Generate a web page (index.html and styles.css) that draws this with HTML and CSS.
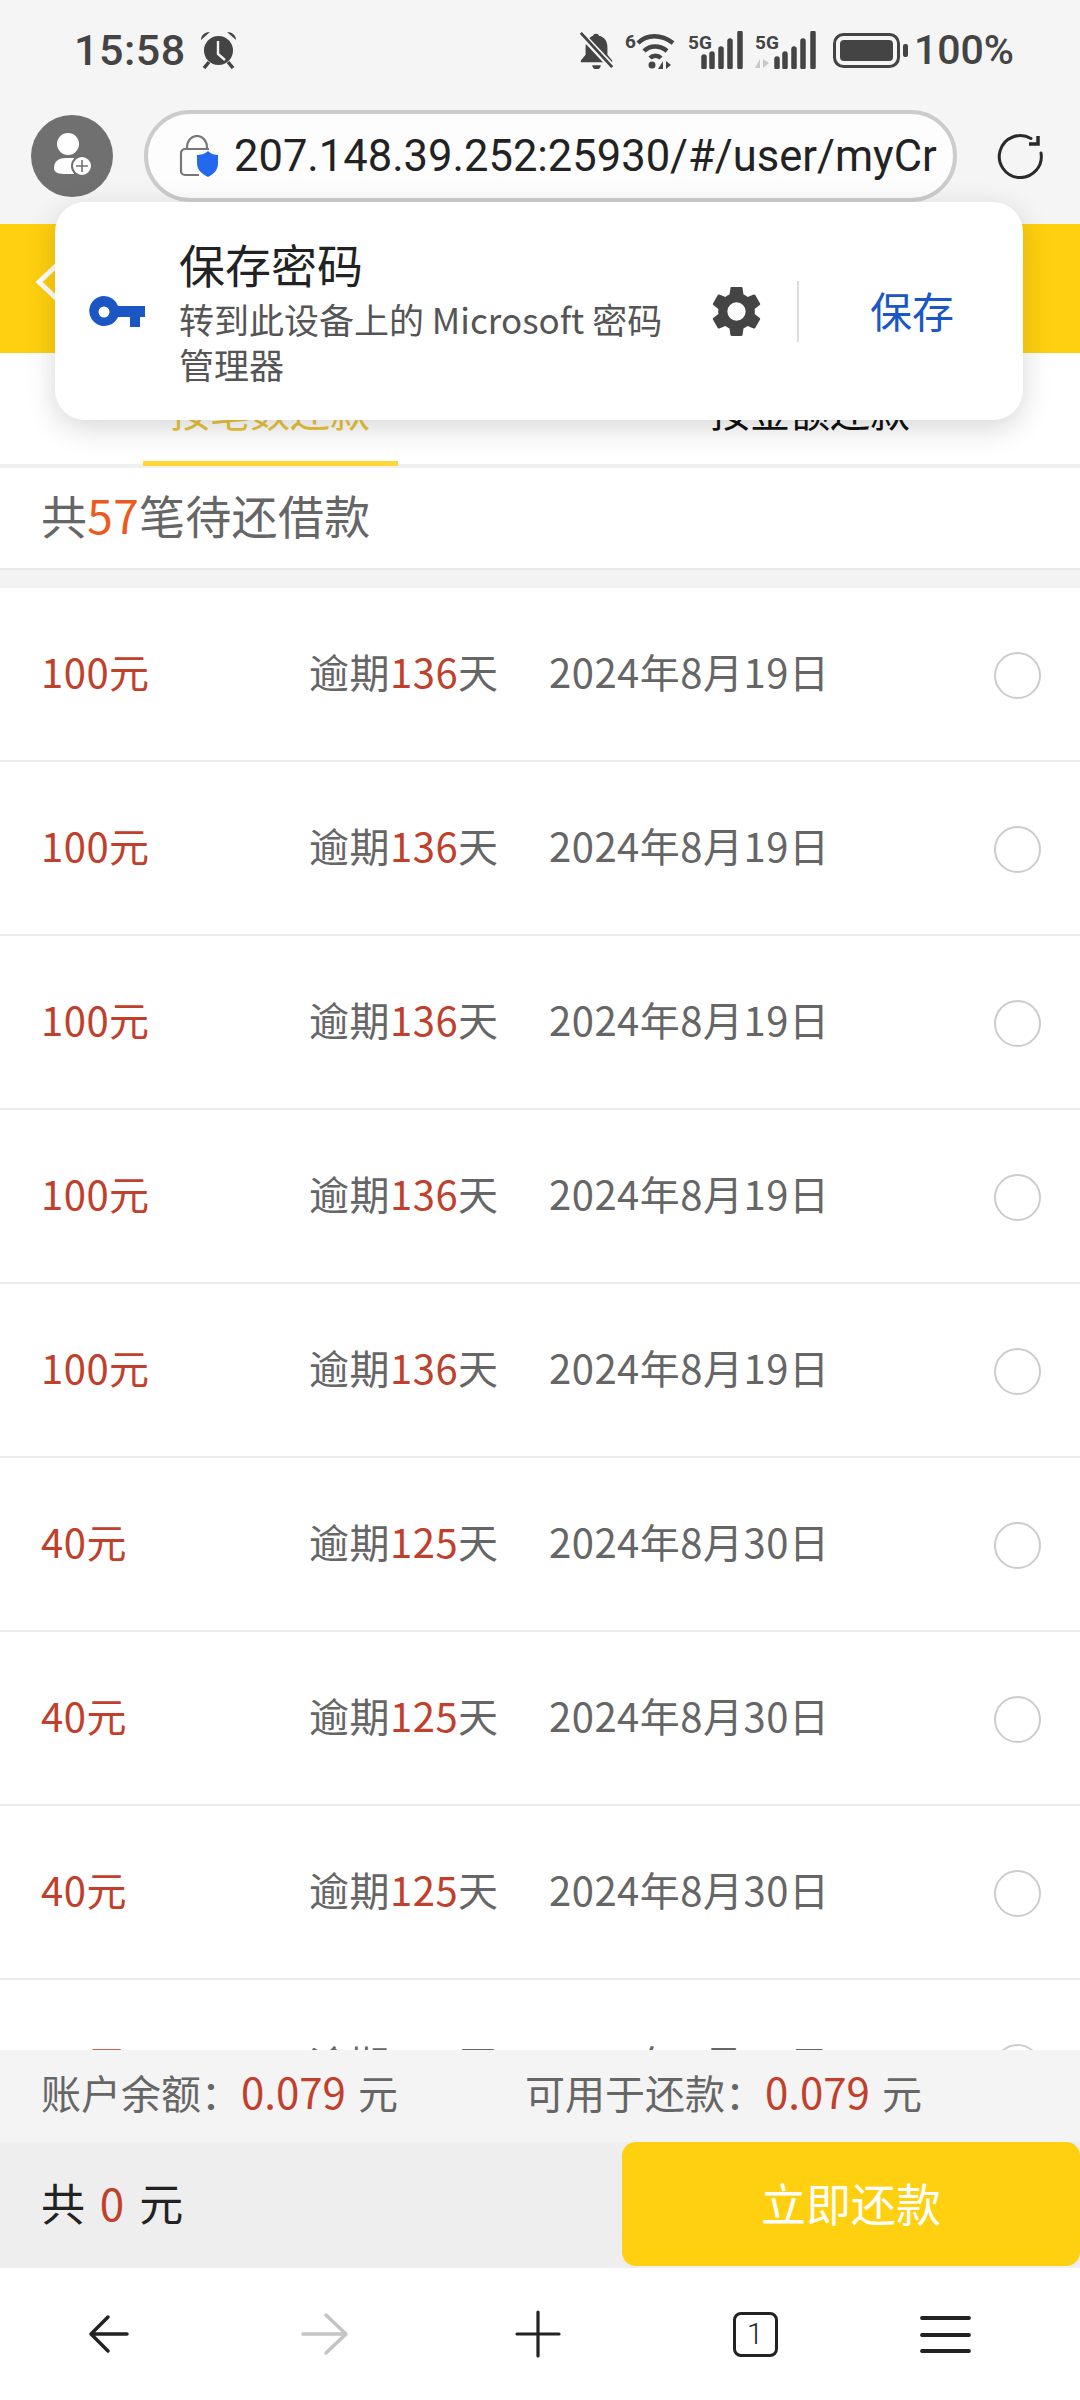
FILE: index.html
```html
<!DOCTYPE html>
<html lang="zh-CN">
<head>
<meta charset="utf-8">
<title>待还借款</title>
<link rel="stylesheet" href="styles.css">
</head>
<body>
<div class="page">
  <div class="status">
    <div class="status-left">
      <span class="time">15:58</span>
      <svg class="alarm" viewBox="0 0 38 38"><circle cx="18.500" cy="19.500" r="14.500" fill="#444"/><path d="M18 10v13l7 6" fill="none" stroke="#f5f5f5" stroke-width="2.400"/><path d="M1 9c0-5 4-8 9-8zM36 9c0-5-4-8-9-8z" fill="#444"/><path d="M9 31l-5 6M28 31l5 6" stroke="#444" stroke-width="3.500" fill="none"/></svg>
    </div>
    <div class="status-right">
      <svg class="ic-bell" viewBox="0 0 35 40"><path d="M17 3c2 0 3 1 3 2 6 1 9 6 9 12v8l5 6v2H1v-2l5-6v-8c0-6 4-11 8-12 0-1 1-2 3-2z" fill="#444"/><path d="M13 36h9a4.500 4.500 0 0 1-9 0z" fill="#444"/><path d="M0 2l34 36" stroke="#f5f5f5" stroke-width="7"/><path d="M1 2l33 36" stroke="#444" stroke-width="3"/></svg>
      <svg class="ic-wifi" viewBox="0 0 52 38"><text x="0" y="17" class="sig-text">6</text><path d="M13 12C22 3 36 3 48 12M19 20c6-6 16-6 23 0M25 27c3-3 8-3 11 0" fill="none" stroke="#444" stroke-width="4.500"/><circle cx="27" cy="34" r="3.500" fill="#444"/><path d="M38 38v-8l-5 8zM41 30v8l5-4z" fill="#444"/></svg>
      <svg class="ic-sig" viewBox="0 0 56 38"><text x="0" y="18" class="sig-text">5G</text><path d="M16 26v10M24 23v13M33 18v18M42 10v26M52 2v34" stroke="#444" stroke-width="5.500" stroke-linecap="round"/></svg>
      <svg class="ic-sig2" viewBox="0 0 62 38"><text x="0" y="18" class="sig-text">5G</text><path d="M5 37v-9l-5 9zM8 28v9l6-5z" fill="#c8c8c8"/><path d="M22 28v8M30 23v13M39 18v18M48 10v26M58 2v34" stroke="#444" stroke-width="5.500" stroke-linecap="round"/></svg>
      <svg class="ic-batt" viewBox="0 0 75 35"><rect x="1.500" y="1.500" width="64" height="32" rx="9" fill="none" stroke="#444" stroke-width="3"/><rect x="7" y="7" width="53" height="21" rx="4" fill="#444"/><rect x="70" y="11" width="5" height="13" rx="2" fill="#444"/></svg>
      <span class="pct">100%</span>
    </div>
  </div>

  <div class="toolbar">
    <div class="avatar">
      <svg class="avatar-ic" viewBox="0 0 82 82"><circle cx="37" cy="29" r="11" fill="#fff"/><path d="M23 53c0-7 5-10 12-10h8v16h-8c-7 0-12-1-12-6z" fill="#fff"/><circle cx="51" cy="51" r="10" fill="#fff" stroke="#707070" stroke-width="2"/><path d="M45 51h12M51 45v12" stroke="#707070" stroke-width="1.600"/></svg>
    </div>
    <div class="urlbar">
      <svg class="lock" viewBox="0 0 40 42"><path d="M6 14a4 4 0 0 0-4 4v18a4 4 0 0 0 4 4h14M30 14H6M8 13c0-16 20-16 20 0" fill="none" stroke="#777" stroke-width="2.200"/><path d="M29 16c3 3 7 4 10 4v8c0 7-4 11-10 14-6-3-11-7-11-14v-8c3 0 8-1 11-4z" fill="#2468ee"/></svg>
      <span class="url">207.148.39.252:25930/#/user/myCr</span>
    </div>
    <svg class="reload" viewBox="0 0 46 46"><path d="M34 5.500A21 21 0 1 0 44 20" fill="none" stroke="#2a2a2a" stroke-width="3" stroke-linecap="round"/><path d="M41 3v8H32" fill="none" stroke="#2a2a2a" stroke-width="3.500"/></svg>
  </div>

  <header class="topbar">
    <svg class="chev" viewBox="0 0 24 44"><path d="M21 3 3 20l18 17" fill="none" stroke="#fff" stroke-width="5"/></svg>
  </header>

  <div class="tabs">
    <div class="tab tab-on">按笔数还款</div>
    <div class="tab">按金额还款</div>
  </div>

  <div class="count">共<span class="orange">57</span>笔待还借款</div>

  <main class="list">
    <div class="row"><span class="amt">100元</span><span class="over">逾期<em>136</em>天</span><span class="date">2024年8月19日</span><i class="radio"></i></div>
    <div class="row"><span class="amt">100元</span><span class="over">逾期<em>136</em>天</span><span class="date">2024年8月19日</span><i class="radio"></i></div>
    <div class="row"><span class="amt">100元</span><span class="over">逾期<em>136</em>天</span><span class="date">2024年8月19日</span><i class="radio"></i></div>
    <div class="row"><span class="amt">100元</span><span class="over">逾期<em>136</em>天</span><span class="date">2024年8月19日</span><i class="radio"></i></div>
    <div class="row"><span class="amt">100元</span><span class="over">逾期<em>136</em>天</span><span class="date">2024年8月19日</span><i class="radio"></i></div>
    <div class="row"><span class="amt">40元</span><span class="over">逾期<em>125</em>天</span><span class="date">2024年8月30日</span><i class="radio"></i></div>
    <div class="row"><span class="amt">40元</span><span class="over">逾期<em>125</em>天</span><span class="date">2024年8月30日</span><i class="radio"></i></div>
    <div class="row"><span class="amt">40元</span><span class="over">逾期<em>125</em>天</span><span class="date">2024年8月30日</span><i class="radio"></i></div>
    <div class="row"><span class="amt">40元</span><span class="over">逾期<em>125</em>天</span><span class="date">2024年8月30日</span><i class="radio"></i></div>
  </main>

  <div class="balance">
    <div class="bal-a">账户余额：<em>0.079</em> 元</div>
    <div class="bal-b">可用于还款：<em>0.079</em> 元</div>
  </div>
  <div class="pay">
    <div class="total">共 <em>0</em> 元</div>
    <div class="paybtn">立即还款</div>
  </div>

  <nav class="nav">
    <svg class="n-ic" viewBox="0 0 60 60"><path d="M30 13 13 30l17 17M13 30h36" fill="none" stroke="#222" stroke-width="3.500" stroke-linecap="round" stroke-linejoin="round"/></svg>
    <svg class="n-ic" viewBox="0 0 60 60"><path d="M33 11 53 30 33 49M10 30h43" fill="none" stroke="#c4c4c4" stroke-width="3.500" stroke-linecap="round" stroke-linejoin="round"/></svg>
    <svg class="n-ic" viewBox="0 0 60 60"><path d="M9 30h42M30 8v44" fill="none" stroke="#222" stroke-width="3.200" stroke-linecap="round"/></svg>
    <div class="tabcount">1</div>
    <svg class="n-ic" viewBox="0 0 60 60"><path d="M6 14h47M6 31h47M6 47h47" fill="none" stroke="#222" stroke-width="3.800" stroke-linecap="round"/></svg>
  </nav>

  <div class="savepop">
    <svg class="key" viewBox="0 0 56 32"><path d="M15 0a15 15 0 0 1 14 10h27v11h-5v10H41V21H29A15 15 0 1 1 15 0z" fill="#1a56c4"/><circle cx="15" cy="16" r="5.500" fill="#fff"/></svg>
    <div class="pop-text">
      <div class="pop-title">保存密码</div>
      <div class="pop-sub">转到此设备上的 Microsoft 密码管理器</div>
    </div>
    <svg class="gear" viewBox="0 0 24 24"><path d="M19.140 12.940c.04-.3.060-.61.060-.94 0-.32-.02-.64-.07-.94l2.030-1.580a.49.49 0 0 0 .12-.61l-1.920-3.320a.488.488 0 0 0-.59-.22l-2.390.96c-.5-.38-1.030-.7-1.620-.94l-.36-2.540a.484.484 0 0 0-.48-.41h-3.840c-.24 0-.43.170-.47.410l-.36 2.540c-.59.24-1.130.57-1.620.94l-2.390-.96c-.22-.08-.47 0-.59.220L2.740 8.870c-.12.210-.08.470.12.610l2.030 1.580c-.05.3-.09.630-.09.940s.02.640.07.940l-2.030 1.580a.49.49 0 0 0-.12.610l1.920 3.320c.12.220.37.290.59.220l2.390-.96c.5.380 1.030.7 1.620.94l.36 2.540c.05.240.24.410.48.410h3.840c.24 0 .44-.170.47-.410l.36-2.540c.59-.24 1.130-.56 1.620-.94l2.390.96c.22.080.47 0 .59-.220l1.920-3.320c.12-.22.070-.47-.12-.61l-2.010-1.580zM12 15.600A3.610 3.610 0 0 1 8.400 12 3.610 3.610 0 0 1 12 8.400a3.610 3.610 0 0 1 3.600 3.600 3.610 3.610 0 0 1-3.600 3.600z" fill="#444"/></svg>
    <div class="pop-div"></div>
    <div class="pop-save">保存</div>
  </div>
</div>
</body>
</html>
```

FILE: styles.css
```css
* { box-sizing: border-box; }
html, body { margin: 0; padding: 0; }
body { font-family: "Noto Sans CJK SC", "Noto Sans", sans-serif; background: #fff; }
em { font-style: normal; }
.page { position: relative; width: 1080px; height: 2400px; overflow: hidden; display: flex; flex-direction: column; }

.status { height: 100px; flex: none; background: #f5f5f5; display: flex; justify-content: space-between; align-items: center; padding: 0 66px 0 74px; color: #444; font-family: Roboto, sans-serif; font-size: 41px; font-weight: 500; }
.status-left, .status-right { display: flex; align-items: center; }
.time { font-size: 43px; letter-spacing: 0.5px; }
.alarm { width: 38px; height: 38px; margin-left: 14px; }
.status-right { gap: 11px; }
.status-right svg { height: 38px; display: block; }
.ic-bell { width: 35px; }
.ic-wifi { width: 52px; }
.ic-sig { width: 56px; }
.ic-sig2 { width: 62px; margin-right: 5px; }
.ic-batt { width: 75px !important; height: 35px !important; }
.pct { margin-left: -5px; font-size: 41px; }
.sig-text { font: 700 19px "Roboto", sans-serif; fill: #444; }

.toolbar { height: 124px; flex: none; background: #f5f5f5; display: flex; align-items: flex-start; padding: 10px 0 0 31px; }
.avatar { width: 82px; height: 82px; margin-top: 5px; border-radius: 50%; background: #707070; flex: none; }
.avatar-ic { width: 82px; height: 82px; display: block; }
.urlbar { margin-left: 31px; width: 813px; height: 92px; border: 4px solid #ccc; border-radius: 46px; background: #fdfdfd; display: flex; align-items: center; padding: 0 14px 0 31px; overflow: hidden; }
.lock { width: 40px; height: 42px; flex: none; }
.url { margin-left: 15px; font-size: 43.500px; color: #222; white-space: nowrap; font-family: Roboto, "Noto Sans", sans-serif; }
.reload { width: 46px; height: 46px; margin: 23px 0 0 40px; flex: none; }

.topbar { height: 129px; flex: none; background: #ffd00f; padding: 38px 0 0 36px; }
.chev { width: 24px; height: 44px; display: block; }

.tabs { height: 115px; flex: none; display: grid; grid-template-columns: 540px 540px; border-bottom: 4px solid #f0f0f0; font-size: 40px; color: #111; }
.tab { text-align: center; line-height: 58px; height: 111px; padding-top: 28px; }
.tab-on { color: #eac43a; width: 255px; justify-self: center; border-bottom: 5px solid #ffd633; height: 113px; white-space: nowrap; }

.count { height: 102px; flex: none; border-bottom: 2px solid #e8e8e8; padding-left: 41px; font-size: 46px; letter-spacing: 0.3px; line-height: 92px; color: #666; }
.orange { color: #ee5a1e; }

.list { flex: 1; min-height: 0; overflow: hidden; background: #fff; border-top: 18px solid #f3f3f3; }
.row { height: 174px; border-bottom: 2px solid #ececec; display: flex; align-items: center; padding-left: 41px; font-size: 40px; color: #666; }
.row > span { margin-bottom: 6px; letter-spacing: 0.5px; }
.row em, .balance em, .total em { color: #c0402c; }
.amt { width: 268px; color: #c0402c; flex: none; }
.over { width: 240px; flex: none; }
.date { width: 445px; flex: none; }
.radio { width: 47px; height: 47px; border: 2px solid #ccc; border-radius: 50%; flex: none; margin-top: 2px; }

.balance { height: 92px; flex: none; background: #f4f4f4; display: flex; align-items: center; padding: 0 0 11px 41px; font-size: 40px; color: #666; }
.balance em { font-size: 42px; }
.bal-a { width: 484px; word-spacing: 3px; }
.bal-b { word-spacing: 3px; }

.pay { height: 126px; flex: none; background: #eee; display: flex; justify-content: space-between; }
.total { padding-left: 41px; font-size: 44px; line-height: 120px; color: #222; word-spacing: 5px; }
.paybtn { width: 458px; height: 124px; background: #ffd00f; border-radius: 14px; color: #fff; font-size: 45px; line-height: 122px; text-align: center; }

.nav { height: 132px; flex: none; background: #fff; display: grid; grid-template-columns: 216px 214px 216px 218px 164px; align-items: center; justify-items: center; }
.n-ic { width: 60px; height: 60px; display: block; }
.tabcount { width: 45px; height: 45px; border: 3.500px solid #222; border-radius: 8px; font-family: Roboto, sans-serif; font-weight: 300; font-size: 29px; line-height: 38px; text-align: center; color: #222; }

.savepop { position: absolute; left: 55px; top: 202px; width: 968px; height: 218px; background: #fff; border-radius: 30px; box-shadow: 0 8px 30px rgba(0,0,0,.16); display: flex; align-items: flex-start; padding: 0 0 0 34px; }
.key { width: 56px; height: 32px; margin-top: 94px; flex: none; }
.pop-text { width: 510px; margin-left: 34px; padding-top: 29px; flex: none; }
.pop-title { font-size: 46px; line-height: 65px; color: #222; }
.pop-sub { font-size: 35px; line-height: 45px; color: #555; }
.gear { width: 61px; height: 61px; margin: 79px 0 0 17px; flex: none; }
.pop-div { width: 2px; height: 61px; background: #ddd; margin: 79px 0 0 30px; flex: none; }
.pop-save { width: 226px; padding-top: 78px; text-align: center; font-size: 42px; line-height: 60px; color: #1a56c4; flex: none; }
```
